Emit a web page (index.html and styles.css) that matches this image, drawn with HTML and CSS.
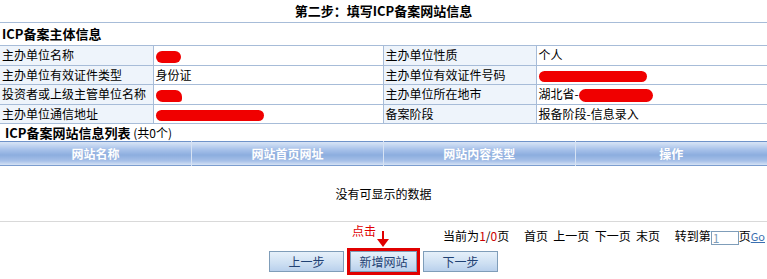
FILE: index.html
```html
<!DOCTYPE html>
<html lang="zh-CN">
<head>
    <meta charset="UTF-8">
    <title>ICP备案 - 填写网站信息</title>
    <link rel="stylesheet" href="styles.css">
</head>
<body>

    <div class="step-title">第二步：填写ICP备案网站信息</div>

    <table class="info">
        <colgroup>
            <col class="col-label">
            <col class="col-value">
            <col class="col-label">
            <col>
        </colgroup>
        <tr>
            <th colspan="4" class="section">ICP备案主体信息</th>
        </tr>
        <tr>
            <td class="label">主办单位名称</td>
            <td class="mid"><span class="mask mask-small"></span></td>
            <td class="label">主办单位性质</td>
            <td>个人</td>
        </tr>
        <tr>
            <td class="label">主办单位有效证件类型</td>
            <td class="mid">身份证</td>
            <td class="label">主办单位有效证件号码</td>
            <td><span class="mask mask-long"></span></td>
        </tr>
        <tr>
            <td class="label">投资者或上级主管单位名称</td>
            <td class="mid"><span class="mask mask-blob"></span></td>
            <td class="label">主办单位所在地市</td>
            <td>湖北省-<span class="mask mask-city"></span></td>
        </tr>
        <tr>
            <td class="label">主办单位通信地址</td>
            <td class="mid"><span class="mask mask-long"></span></td>
            <td class="label">备案阶段</td>
            <td>报备阶段-信息录入</td>
        </tr>
    </table>

    <div class="list-title"><b>ICP备案网站信息列表</b> (共0个)</div>

    <table class="list">
        <tr>
            <th>网站名称</th>
            <th>网站首页网址</th>
            <th>网站内容类型</th>
            <th>操作</th>
        </tr>
    </table>

    <div class="empty">没有可显示的数据</div>

    <div class="pager">
        当前为<span class="num">1</span>/<span class="num">0</span>页
        <span class="gap"></span>首页 &nbsp;上一页 &nbsp;下一页 &nbsp;末页
        <span class="gap"></span>转到第<input type="text" class="page-input" value="1">页<a href="#" class="go">Go</a>
    </div>

    <div class="actions">
        <div class="hint">
            <span class="hint-text">点击</span>
            <svg class="arrow" width="12" height="16" viewBox="0 0 12 16">
                <rect x="5" y="0" width="2" height="9" fill="#e00000"/>
                <polygon points="0,8 12,8 6,16" fill="#e00000"/>
            </svg>
        </div>
        <button class="btn">上一步</button>
        <span class="highlight"><button class="btn btn-add">新增网站</button></span>
        <button class="btn">下一步</button>
    </div>

</body>
</html>
```

FILE: styles.css
```css
body {
    margin: 0;
    padding: 0;
    width: 767px;
    background: #fff;
    font-family: "Noto Sans CJK SC", "Liberation Sans", sans-serif;
    font-size: 12px;
    color: #000;
}
.step-title {
    height: 22px;
    line-height: 22px;
    text-align: center;
    font-size: 13px;
    font-weight: bold;
    border-bottom: 1px solid #a7bcd8;
}
.info {
    width: 767px;
    border-collapse: collapse;
    table-layout: fixed;
}
.info .col-label {
    width: 153px;
}
.info .col-value {
    width: 230px;
}
.info td, .info th {
    border-top: 1px solid #a7bcd8;
    border-bottom: 1px solid #a7bcd8;
    height: 18.5px;
    padding: 0 0 0 2px;
    line-height: 18px;
    text-align: left;
    white-space: nowrap;
    overflow: hidden;
}
.info td.label {
    background: #eef4fb;
    border-right: 1px solid #a7bcd8;
}
.info td.mid {
    border-right: 1px solid #a7bcd8;
}
.info th.section {
    border-top: none;
    height: 22px;
    font-size: 13px;
    font-weight: bold;
}
.mask {
    display: inline-block;
    vertical-align: middle;
    background: #f00000;
    border-radius: 8px;
    height: 11px;
}
.mask-small {
    width: 25px;
    height: 12px;
}
.mask-blob {
    width: 26px;
    height: 12px;
    border-radius: 10px 12px 6px 12px;
}
.mask-long {
    width: 108px;
}
.mask-city {
    width: 74px;
    height: 13px;
}
.list-title {
    height: 17px;
    line-height: 17px;
    padding-left: 5px;
    font-size: 12px;
}
.list-title b {
    font-size: 13px;
}
.list {
    width: 767px;
    border-collapse: collapse;
    table-layout: fixed;
    border-top: 1px solid #6f93c9;
    border-bottom: 1px solid #7b9dcf;
}
.list th {
    height: 23px;
    padding: 0;
    color: #fff;
    font-weight: bold;
    font-size: 12px;
    text-shadow: 0 0 1px #9ab4dc;
    background: linear-gradient(#d6e3f5, #a8c2ea 30%, #8cadde 55%, #a6c0e8 80%, #dbe6f6);
    border-right: 1px solid #d6e2f3;
}
.list th:last-child {
    border-right: none;
}
.empty {
    height: 55px;
    line-height: 55px;
    text-align: center;
    border-bottom: 1px solid #d9d9d9;
}
.pager {
    height: 26px;
    line-height: 28px;
    text-align: right;
    padding-right: 2px;
}
.pager .num {
    color: #cc0000;
}
.pager .gap {
    display: inline-block;
    width: 12px;
}
.page-input {
    width: 24px;
    height: 12px;
    padding: 0 1px;
    margin: 0;
    border: 1px solid #7f9db9;
    font-family: inherit;
    font-size: 12px;
    color: #7f9db9;
    vertical-align: middle;
}
.go {
    color: #3a6fb0;
    font-size: 11px;
}
.actions {
    position: relative;
    display: flex;
    justify-content: center;
    align-items: center;
    gap: 3px;
    padding-left: 0;
}
.hint {
    position: absolute;
    left: 352px;
    top: -26px;
    width: 40px;
    height: 26px;
}
.hint-text {
    color: #e00000;
    font-size: 12px;
    line-height: 14px;
}
.arrow {
    position: absolute;
    left: 25px;
    top: 9px;
}
.btn {
    width: 75px;
    height: 21px;
    padding: 0;
    border: 1px solid #7f9db9;
    background: linear-gradient(#e6f0fa, #cddff2 60%, #b9d0ec);
    color: #1f4173;
    font-family: inherit;
    font-size: 12px;
}
.highlight {
    border: 3px solid #e00000;
    padding: 0;
    display: inline-flex;
}
.btn-add {
    width: 67px;
}
```
